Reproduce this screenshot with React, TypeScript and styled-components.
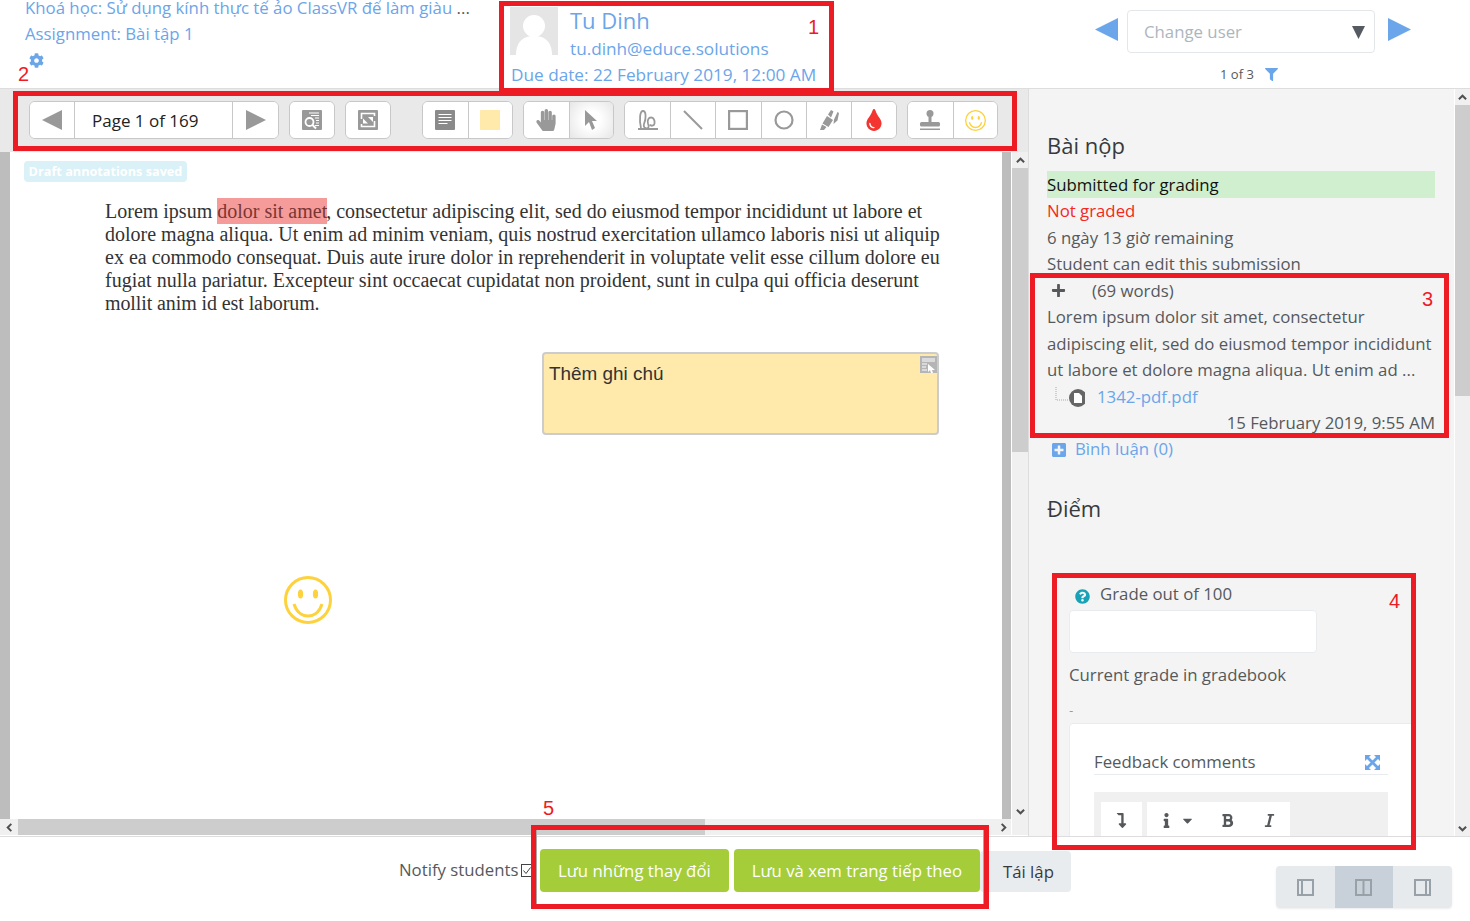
import React from "react";
import {
	FaBold,
	FaCaretDown,
	FaCog,
	FaFilter,
	FaHandPaper,
	FaInfo,
	FaItalic,
	FaLevelDownAlt,
	FaPlus,
	FaPlusSquare,
	FaQuestionCircle,
	FaTint,
} from "react-icons/fa";
import styled, { createGlobalStyle } from "styled-components";

const GlobalStyle = createGlobalStyle`
  html, body {
    margin: 0;
    padding: 0;
    background: #fff;
    font-family: "Open Sans", "Noto Sans", sans-serif;
    font-size: 16.8px;
    color: #55595c;
  }
  * { box-sizing: border-box; }
`;

const LINK = "#6ba5ea";

const Page = styled.div`
  position: relative;
  width: 1470px;
  height: 921px;
  overflow: hidden;
  display: flex;
  flex-direction: column;
`;

/* ---------- header ---------- */

const Header = styled.header`
  height: 89px;
  flex: 0 0 auto;
  display: flex;
  border-bottom: 1px solid #ddd;
`;

const CourseInfo = styled.div`
  width: 500px;
  padding: 0 0 0 25px;
  display: flex;
  flex-direction: column;
  white-space: nowrap;
`;

const CourseLine = styled.div`
  line-height: 16px;
  margin-bottom: 5px;
`;

const HeaderLink = styled.span`
  color: ${LINK};
`;

const AssignmentLink = styled(HeaderLink)`
  line-height: 26px;
`;

const GearRow = styled.div`
  color: ${LINK};
  font-size: 15px;
  height: 26px;
  padding-left: 4px;
  display: flex;
  align-items: center;
`;

const UserBlock = styled.div`
  width: 335px;
  padding: 7px 0 0 10px;
  display: flex;
  flex-direction: column;
`;

const UserRow = styled.div`
  display: flex;
  gap: 12px;
`;

const Avatar = styled.div`
  width: 48px;
  height: 48px;
  background: #e5e5e5;
  overflow: hidden;
`;

const UserText = styled.div`
  display: flex;
  flex-direction: column;
  margin-top: -2px;
`;

const UserName = styled.span`
  color: ${LINK};
  font-size: 22px;
  line-height: 30px;
`;

const UserEmail = styled.span`
  color: ${LINK};
  font-size: 17.2px;
  line-height: 24px;
  margin-top: 2px;
  white-space: nowrap;
`;

const DueDate = styled.span`
  color: ${LINK};
  font-size: 17.2px;
  line-height: 24px;
  margin: 2px 0 0 1px;
  white-space: nowrap;
`;

const UserSwitcher = styled.div`
  flex: 1;
  padding: 10px 0 0 260px;
  display: flex;
  flex-direction: column;
`;

const SwitcherRow = styled.div`
  display: flex;
  align-items: flex-start;
  gap: 9px;
`;

const ArrowIcon = styled.svg`
  width: 23px;
  height: 23px;
  margin-top: 8px;
  flex: 0 0 auto;
`;

const SelectBox = styled.div`
  width: 248px;
  height: 43px;
  margin: 0 4px 0 0;
  border: 1px solid #e4e7ea;
  border-radius: 4px;
  background: #fff;
  padding: 0 9px 0 16px;
  display: flex;
  align-items: center;
  justify-content: space-between;
  color: #adb5bd;
`;

const SelectCaret = styled.svg`
  width: 13px;
  height: 13px;
  margin-top: 1px;
`;

const Counter = styled.div`
  display: flex;
  align-items: center;
  gap: 11px;
  font-size: 13px;
  margin: 11px 0 0 125px;
  line-height: 20px;
  color: #55595c;
`;

const FilterIcon = styled.span`
  color: ${LINK};
  display: inline-flex;
  font-size: 13px;
`;

/* ---------- main area ---------- */

const Main = styled.div`
  flex: 1;
  min-height: 0;
  display: flex;
`;

const LeftColumn = styled.section`
  width: 1029px;
  flex: 0 0 auto;
  display: flex;
  flex-direction: column;
  border-right: 1px solid #ddd;
`;

const Toolbar = styled.div`
  height: 63px;
  flex: 0 0 auto;
  background: #e9e9e9;
  padding: 12px 0 0 29px;
  display: flex;
  align-items: flex-start;
`;

const ToolGroup = styled.div<{ $gap?: number }>`
  display: flex;
  height: 38px;
  margin-left: ${(p) => p.$gap ?? 10}px;
  background: #fff;
  border: 1px solid #c8c8c8;
  border-radius: 6px;
  overflow: hidden;
`;

const ToolButton = styled.div<{ $w?: number; $active?: boolean; $color?: string }>`
  width: ${(p) => p.$w ?? 45.2}px;
  display: flex;
  align-items: center;
  justify-content: center;
  color: ${(p) => p.$color ?? "#999"};
  font-size: 22px;
  background: ${(p) =>
		p.$active ? "radial-gradient(circle, #fff 30%, #e6e6e6 100%)" : "#fff"};
  & + & {
    border-left: 1px solid #c8c8c8;
  }
`;

const PageLabel = styled.span`
  color: #222;
  font-size: 17px;
  white-space: nowrap;
  width: 100%;
  padding-left: 17px;
`;

const PdfFrame = styled.div`
  flex: 1;
  min-height: 0;
  display: grid;
  grid-template-columns: 1fr 17px;
  grid-template-rows: 1fr 16px;
  margin-bottom: 1px;
`;

const PdfViewport = styled.div`
  position: relative;
  background: #fff;
  border-left: 10px solid #bdbdbd;
  border-right: 9px solid #bdbdbd;
  overflow: hidden;
  padding: 47px 0 0 95px;
`;

const DraftBadge = styled.div`
  position: absolute;
  left: 14px;
  top: 9px;
  width: 163px;
  height: 21px;
  background: #d9f1f7;
  border-radius: 4px;
  color: #fff;
  font-size: 12.7px;
  font-weight: 700;
  line-height: 21px;
  text-align: center;
  white-space: nowrap;
`;

const PdfLine = styled.div<{ $spacing?: number }>`
  font-family: "Liberation Serif", "Times New Roman", serif;
  font-size: 20px;
  line-height: 23px;
  color: #333;
  white-space: nowrap;
  letter-spacing: ${(p) => p.$spacing ?? 0}px;
`;

const Highlight = styled.span`
  background: #f59c9a;
  color: #7a3533;
  padding: 1px 0;
  display: inline-block;
  line-height: 24px;
  margin: -1px -1px -1px 0;
`;

const StickyNote = styled.div`
  position: absolute;
  left: 532px;
  top: 200px;
  width: 397px;
  height: 83px;
  background: #ffe9ab;
  border: 2px solid #ccc;
  border-radius: 4px;
  padding: 8px 5px;
  font-family: "Liberation Sans", Arial, sans-serif;
  font-size: 18.9px;
  line-height: 24px;
  color: #333;
`;

const NoteMenu = styled.svg`
  position: absolute;
  right: 0;
  top: 2px;
  width: 17px;
  height: 17px;
`;

const Smiley = styled.svg<{ $size: number }>`
  width: ${(p) => p.$size}px;
  height: ${(p) => p.$size}px;
`;

const PlacedStamp = styled.div`
  position: absolute;
  left: 274px;
  top: 424px;
  display: flex;
`;

const ScrollTrack = styled.div<{ $horizontal?: boolean }>`
  background: #f0f0f0;
  display: flex;
  flex-direction: ${(p) => (p.$horizontal ? "row" : "column")};
  align-items: stretch;
  border-left: ${(p) => (p.$horizontal ? "0" : "1px solid #fff")};
`;

const ScrollArrow = styled.div<{ $size?: number }>`
  flex: 0 0 ${(p) => p.$size ?? 16}px;
  display: flex;
  align-items: center;
  justify-content: center;
`;

const ScrollThumb = styled.div<{ $size: number }>`
  flex: 0 0 ${(p) => p.$size}px;
  background: #cdcdcd;
`;

const ScrollRest = styled.div`
  flex: 1;
`;

const Corner = styled.div`
  background: #f0f0f0;
  border-left: 1px solid #fff;
`;

/* ---------- right column ---------- */

const SidePanel = styled.aside`
  flex: 1;
  min-width: 0;
  display: grid;
  grid-template-columns: 1fr 16px;
  background: #f4f4f4;
  overflow: hidden;
`;

const SideContent = styled.div`
  padding: 42px 19px 0 18px;
  overflow: hidden;
  line-height: 26.4px;
  min-height: 0;
`;

const SectionTitle = styled.h3<{ $top?: number }>`
  margin: ${(p) => p.$top ?? 0}px 0 12px;
  font-size: 22px;
  font-weight: 400;
  line-height: 28px;
  color: #373a3c;
`;

const StatusRow = styled.div<{ $tone?: "ok" | "bad" }>`
  white-space: nowrap;
  color: ${(p) =>
		p.$tone === "ok" ? "#111" : p.$tone === "bad" ? "#f4281c" : "#55595c"};
  background: ${(p) => (p.$tone === "ok" ? "#cfefcf" : "transparent")};
  height: ${(p) => (p.$tone === "ok" ? 27 : 26.5)}px;
  line-height: ${(p) => (p.$tone === "ok" ? 28 : 26.4)}px;
`;

const WordCount = styled.div`
  display: flex;
  align-items: center;
  height: 26.5px;
  padding-left: 4px;
  gap: 26px;
`;

const PlusIcon = styled.span`
  display: inline-flex;
  color: #55595c;
  font-size: 15px;
`;

const FileRow = styled.div`
  display: flex;
  align-items: center;
  height: 26.5px;
  gap: 12px;
  padding-left: 8px;
  color: ${LINK};
`;

const DateRow = styled.div`
  text-align: right;
  height: 26.5px;
  white-space: nowrap;
`;

const CommentsRow = styled.div`
  display: flex;
  align-items: center;
  gap: 8px;
  height: 26px;
  padding-left: 4px;
  color: ${LINK};
`;

const CommentsIcon = styled.span`
  display: inline-flex;
  font-size: 16px;
`;

const GradeForm = styled.div`
  padding: 48px 0 0 22px;
  width: 386px;
`;

const GradeLabel = styled.div`
  display: flex;
  align-items: center;
  gap: 10px;
  padding-left: 6px;
  height: 26px;
`;

const HelpIcon = styled.span`
  display: inline-flex;
  color: #17a2b8;
  font-size: 15px;
  margin-top: 3px;
`;

const GradeInput = styled.div`
  width: 248px;
  height: 43px;
  margin-top: 2px;
  background: #fff;
  border: 1px solid #e9ecef;
  border-radius: 4px;
`;

const GradebookLabel = styled.div`
  margin-top: 9px;
  height: 26px;
`;

const GradeDash = styled.div`
  color: ${LINK};
  margin-top: 9px;
  height: 26px;
  font-size: 13px;
`;

const FeedbackCard = styled.div`
  height: 140px;
  width: 345px;
  background: #fff;
  border: 1px solid #e9ecef;
  border-radius: 4px 0 0 0;
  padding: 26px 24px 0;
`;

const FeedbackHead = styled.div`
  display: flex;
  justify-content: space-between;
  align-items: center;
  height: 25px;
  border-bottom: 1px solid #e9ecef;
  width: 294px;
  padding: 2px 8px 0 0;
  white-space: nowrap;
`;

const EditorBar = styled.div`
  margin-top: 17px;
  width: 294px;
  height: 60px;
  background: #f0f0f0;
  padding: 10px 0 0 7px;
  display: flex;
  gap: 5px;
`;

const EditorGroup = styled.div`
  display: flex;
  background: #fff;
  height: 40px;
`;

const EditorButton = styled.div<{ $w: number }>`
  width: ${(p) => p.$w}px;
  display: flex;
  align-items: flex-start;
  justify-content: center;
  gap: 6px;
  padding-top: 11px;
  color: #55595c;
  font-size: 15px;
`;

/* ---------- footer ---------- */

const Footer = styled.footer`
  height: 85px;
  flex: 0 0 auto;
  background: #fff;
  border-top: 1px solid #ddd;
  display: flex;
  align-items: flex-start;
  padding: 0 18px 0 399px;
  font-size: 16.75px;
`;

const NotifyLabel = styled.label`
  display: flex;
  align-items: center;
  height: 26px;
  margin-top: 19px;
  gap: 3px;
  width: 135px;
  white-space: nowrap;
`;

const CheckBox = styled.svg`
  width: 12px;
  height: 13px;
  margin-top: 2px;
`;

const ActionButton = styled.div<{ $primary?: boolean; $gap: number }>`
  height: ${(p) => (p.$primary ? 43 : 41)}px;
  margin: ${(p) => (p.$primary ? 12 : 14)}px 0 0 ${(p) => p.$gap}px;
  padding: 0 ${(p) => (p.$primary ? 18 : 17)}px 0 ${(p) => (p.$primary ? 18 : 23)}px;
  background: ${(p) => (p.$primary ? "#a4cd39" : "#e9ecef")};
  color: ${(p) => (p.$primary ? "#fff" : "#373a3c")};
  border-radius: 4px;
  display: flex;
  align-items: center;
  white-space: nowrap;
`;

const LayoutSwitch = styled.div`
  display: flex;
  margin: 29px 0 0 auto;
  height: 42px;
  border-radius: 4px;
  overflow: hidden;
  box-shadow: 0 1px 2px rgba(0, 0, 0, 0.08);
`;

const LayoutButton = styled.div<{ $active?: boolean }>`
  width: 58.7px;
  display: flex;
  align-items: center;
  justify-content: center;
  background: ${(p) => (p.$active ? "#c8d0d9" : "#e7eaed")};
`;

/* ---------- red callouts drawn over the screenshot ---------- */

const Callout = styled.div<{ $x: number; $y: number; $w: number; $h: number; $inner?: boolean }>`
  position: absolute;
  left: ${(p) => p.$x}px;
  top: ${(p) => p.$y}px;
  width: ${(p) => p.$w}px;
  height: ${(p) => p.$h}px;
  border: 5px solid #ed1c24;
  pointer-events: none;
  box-shadow: ${(p) =>
		p.$inner ? "inset 1px 0 #a8a8a8, inset -1px 0 #a8a8a8" : "none"};
`;

const CalloutNumber = styled.span<{ $x: number; $y: number }>`
  position: absolute;
  left: ${(p) => p.$x}px;
  top: ${(p) => p.$y}px;
  font-family: "Liberation Sans", Arial, sans-serif;
  font-size: 20px;
  line-height: 22px;
  color: #ed1c24;
`;

/* ---------- icons ---------- */

const GlyphSvg = styled.svg<{ $size?: number }>`
  width: ${(p) => p.$size ?? 20}px;
  height: ${(p) => p.$size ?? 20}px;
`;

const ChevronSvg = styled.svg<{ $rotate: number }>`
  width: 9px;
  height: 9px;
  transform: rotate(${(p) => p.$rotate}deg);
`;

const Triangle = ({ dir, color, size = 20 }: { dir: "l" | "r"; color: string; size?: number }) => (
	<GlyphSvg $size={size} viewBox="0 0 20 20">
		<polygon
			points={dir === "l" ? "0,10 20,0 20,20" : "0,0 20,10 0,20"}
			fill={color}
		/>
	</GlyphSvg>
);

const SearchDocIcon = () => (
	<GlyphSvg viewBox="0 0 20 20">
		<rect width="20" height="20" rx="1" fill="#999" />
		<path d="M7 3h10M9 5.5h8M13 8h4M14 10.5h3M14 13h3M13 15.5h4" stroke="#fff" strokeWidth="1" />
		<circle cx="7.5" cy="12" r="4" fill="none" stroke="#fff" strokeWidth="1.8" />
		<path d="M10.5 15l3.5 3.5" stroke="#fff" strokeWidth="2" />
	</GlyphSvg>
);

const ExpandBoxIcon = () => (
	<GlyphSvg viewBox="0 0 20 20">
		<rect width="20" height="20" rx="1" fill="#999" />
		<path d="M3.5 9V3.5h13V6M16.500 11v5.500h-13V14" fill="none" stroke="#fff" strokeWidth="1.6" />
		<polygon points="10,7 15,7 15,12" fill="#fff" />
		<polygon points="5,8.500 5,13.500 10,13.500" fill="#fff" />
	</GlyphSvg>
);

const CommentListIcon = () => (
	<GlyphSvg viewBox="0 0 20 20">
		<rect width="20" height="20" rx="1" fill="#8a8a8a" />
		<path d="M3.500 4.500h13M3.500 7.500h13M3.500 10.500h13M3.500 13.500h9" stroke="#fff" strokeWidth="1.2" />
	</GlyphSvg>
);

const ColorSwatch = () => (
	<GlyphSvg viewBox="0 0 20 20">
		<rect width="20" height="20" rx="1" fill="#ffe9ab" />
	</GlyphSvg>
);

const PointerIcon = () => (
	<GlyphSvg viewBox="0 0 20 20">
		<path d="M4 0l12 11h-5l3 7-3 2-3-8-4 4z" fill="#999" />
	</GlyphSvg>
);

const PenIcon = () => (
	<GlyphSvg $size={22} viewBox="0 0 22 22">
		<path
			d="M1 20h20M4 19C2 10 3 2 6 2s3.500 7 1 13c-1 3 1 4.500 3 4.500s2-2.500 1-5c-1-3 .500-6 3-6s4 2.500 3.500 6c-.500 2.500-3.500 3-4.500 1"
			fill="none"
			stroke="#999"
			strokeWidth="1.8"
		/>
	</GlyphSvg>
);

const LineIcon = () => (
	<GlyphSvg viewBox="0 0 20 20">
		<path d="M1 1l18 18" stroke="#999" strokeWidth="2" />
	</GlyphSvg>
);

const RectIcon = () => (
	<GlyphSvg viewBox="0 0 20 20">
		<rect x="1" y="1" width="18" height="18" fill="none" stroke="#999" strokeWidth="2.4" />
	</GlyphSvg>
);

const CircleIcon = () => (
	<GlyphSvg viewBox="0 0 20 20">
		<circle cx="10" cy="10" r="8.500" fill="none" stroke="#999" strokeWidth="2.2" />
	</GlyphSvg>
);

const MarkerIcon = () => (
	<GlyphSvg viewBox="0 0 20 20">
		<path
			d="M1 20l2-5.500 4.500 2.500-2.500 3zM3.500 13.500L8 6l6 4-4.500 7zM9 4.500L12 0l2.500 1.500-2.500 6zM15 9.500L18.500 2 20 3l-1.500 7.500-4 3.500z"
			fill="#999"
		/>
	</GlyphSvg>
);

const StampIcon = () => (
	<GlyphSvg $size={22} viewBox="0 0 22 22">
		<circle cx="11" cy="4.500" r="3.500" fill="#999" />
		<path d="M9.500 7h3v6.500h-3z" fill="#999" />
		<rect x="1" y="13" width="20" height="4.500" rx="1.500" fill="#999" />
		<rect x="1" y="19.500" width="20" height="1.500" fill="#999" />
	</GlyphSvg>
);

const SmileyFace = ({ size, weight }: { size: number; weight: number }) => (
	<Smiley $size={size} viewBox="0 0 48 48">
		<circle cx="24" cy="24" r="22.500" fill="none" stroke="#fdd23c" strokeWidth={weight} />
		<ellipse cx="16.500" cy="18" rx="2.600" ry="4.500" fill="#fdd23c" />
		<ellipse cx="31.500" cy="18" rx="2.600" ry="4.500" fill="#fdd23c" />
		<path d="M10 28c3 10 10 12 14 12s11-2 14-12" fill="none" stroke="#fdd23c" strokeWidth={weight} />
	</Smiley>
);

const LayoutIcon = ({ split }: { split: number }) => (
	<GlyphSvg $size={17} viewBox="0 0 17 17">
		<rect x="1" y="1" width="15" height="15" fill="none" stroke="#98a0a8" strokeWidth="2" />
		<path d={`M${split} 1v15`} stroke="#98a0a8" strokeWidth="2" />
	</GlyphSvg>
);

const FileBadge = () => (
	<GlyphSvg $size={30} viewBox="0 0 30 20">
		<path d="M1 0v13h12" fill="none" stroke="#aaa" strokeDasharray="1 1" />
		<circle cx="23" cy="11" r="9" fill="#666" />
		<path d="M19 6h5l3 3v7h-8z" fill="#fff" />
	</GlyphSvg>
);

const FullscreenIcon = () => (
	<GlyphSvg $size={15} viewBox="0 0 15 15">
		<path d="M0 0h6L0 6zM15 0v6L9 0zM0 15V9l6 6zM15 15H9l6-6z" fill={LINK} />
		<path d="M2 2l11 11M13 2L2 13" stroke={LINK} strokeWidth="2.800" />
	</GlyphSvg>
);

const Chevron = ({ rotate }: { rotate: number }) => (
	<ChevronSvg $rotate={rotate} viewBox="0 0 10 10">
		<path d="M1 7l4-4 4 4" fill="none" stroke="#505050" strokeWidth="2.200" />
	</ChevronSvg>
);

const App: React.FC = () => {
	return (
		<Page>
			<GlobalStyle />
			<Header>
				<CourseInfo>
					<CourseLine>
						<HeaderLink>
							Khoá học: Sử dụng kính thực tế ảo ClassVR để làm giàu
						</HeaderLink>{" "}
						...
					</CourseLine>
					<AssignmentLink>Assignment: Bài tập 1</AssignmentLink>
					<GearRow>
						<FaCog />
					</GearRow>
				</CourseInfo>
				<UserBlock>
					<UserRow>
						<Avatar>
							<GlyphSvg $size={48} viewBox="0 0 48 48">
								<circle cx="24" cy="19" r="11" fill="#fff" />
								<path d="M6 48c0-14 8-19 18-19s18 5 18 19z" fill="#fff" />
							</GlyphSvg>
						</Avatar>
						<UserText>
							<UserName>Tu Dinh</UserName>
							<UserEmail>tu.dinh@educe.solutions</UserEmail>
						</UserText>
					</UserRow>
					<DueDate>Due date: 22 February 2019, 12:00 AM</DueDate>
				</UserBlock>
				<UserSwitcher>
					<SwitcherRow>
						<ArrowIcon viewBox="0 0 23 23">
							<polygon points="0,11.5 23,0 23,23" fill={LINK} />
						</ArrowIcon>
						<SelectBox>
							Change user
							<SelectCaret viewBox="0 0 13 13">
								<polygon points="0,0 13,0 6.5,13" fill="#555b60" />
							</SelectCaret>
						</SelectBox>
						<ArrowIcon viewBox="0 0 23 23">
							<polygon points="0,0 23,11.5 0,23" fill={LINK} />
						</ArrowIcon>
					</SwitcherRow>
					<Counter>
						1 of 3
						<FilterIcon>
							<FaFilter />
						</FilterIcon>
					</Counter>
				</UserSwitcher>
			</Header>

			<Main>
				<LeftColumn>
					<Toolbar>
						<ToolGroup $gap={0}>
							<ToolButton $w={44}>
								<Triangle dir="l" color="#999" />
							</ToolButton>
							<ToolButton $w={158}>
								<PageLabel>Page 1 of 169</PageLabel>
							</ToolButton>
							<ToolButton $w={46}>
								<Triangle dir="r" color="#999" />
							</ToolButton>
						</ToolGroup>
						<ToolGroup>
							<ToolButton $w={44}>
								<SearchDocIcon />
							</ToolButton>
						</ToolGroup>
						<ToolGroup>
							<ToolButton $w={44}>
								<ExpandBoxIcon />
							</ToolButton>
						</ToolGroup>
						<ToolGroup $gap={31}>
							<ToolButton $w={44.5}>
								<CommentListIcon />
							</ToolButton>
							<ToolButton $w={44.5}>
								<ColorSwatch />
							</ToolButton>
						</ToolGroup>
						<ToolGroup>
							<ToolButton $w={44.5}>
								<FaHandPaper />
							</ToolButton>
							<ToolButton $w={44.5} $active>
								<PointerIcon />
							</ToolButton>
						</ToolGroup>
						<ToolGroup>
							<ToolButton>
								<PenIcon />
							</ToolButton>
							<ToolButton>
								<LineIcon />
							</ToolButton>
							<ToolButton>
								<RectIcon />
							</ToolButton>
							<ToolButton>
								<CircleIcon />
							</ToolButton>
							<ToolButton>
								<MarkerIcon />
							</ToolButton>
							<ToolButton $color="#f4352f">
								<FaTint />
							</ToolButton>
						</ToolGroup>
						<ToolGroup>
							<ToolButton $w={44.5}>
								<StampIcon />
							</ToolButton>
							<ToolButton $w={44.5}>
								<SmileyFace size={21} weight={3} />
							</ToolButton>
						</ToolGroup>
					</Toolbar>
					<PdfFrame>
						<PdfViewport>
							<DraftBadge>Draft annotations saved</DraftBadge>
							<PdfLine>
								Lorem ipsum <Highlight>dolor sit amet</Highlight>, consectetur
								adipiscing elit, sed do eiusmod tempor incididunt ut labore et
							</PdfLine>
							<PdfLine>
								dolore magna aliqua. Ut enim ad minim veniam, quis nostrud
								exercitation ullamco laboris nisi ut aliquip
							</PdfLine>
							<PdfLine>
								ex ea commodo consequat. Duis aute irure dolor in reprehenderit
								in voluptate velit esse cillum dolore eu
							</PdfLine>
							<PdfLine>
								fugiat nulla pariatur. Excepteur sint occaecat cupidatat non
								proident, sunt in culpa qui officia deserunt
							</PdfLine>
							<PdfLine $spacing={-0.1}>mollit anim id est laborum.</PdfLine>
							<StickyNote>
								Thêm ghi chú
								<NoteMenu viewBox="0 0 17 17">
									<rect width="17" height="17" fill="#b5b5b5" />
									<path d="M2 3h13M2 5h13" stroke="#fff" strokeWidth="1" />
									<path d="M2 8h5M2 11h4M2 14h5" stroke="#fff" />
									<path d="M8 8l7 6h-3l1 3h-2l-1-3-2 2z" fill="#fff" />
								</NoteMenu>
							</StickyNote>
							<PlacedStamp>
								<SmileyFace size={48} weight={3} />
							</PlacedStamp>
						</PdfViewport>
						<ScrollTrack>
							<ScrollArrow>
								<Chevron rotate={0} />
							</ScrollArrow>
							<ScrollThumb $size={284} />
							<ScrollRest />
							<ScrollArrow>
								<Chevron rotate={180} />
							</ScrollArrow>
						</ScrollTrack>
						<ScrollTrack $horizontal>
							<ScrollArrow $size={18}>
								<Chevron rotate={-90} />
							</ScrollArrow>
							<ScrollThumb $size={687} />
							<ScrollRest />
							<ScrollArrow>
								<Chevron rotate={90} />
							</ScrollArrow>
						</ScrollTrack>
						<Corner />
					</PdfFrame>
				</LeftColumn>

				<SidePanel>
					<SideContent>
						<SectionTitle>Bài nộp</SectionTitle>
						<StatusRow $tone="ok">Submitted for grading</StatusRow>
						<StatusRow $tone="bad">Not graded</StatusRow>
						<StatusRow>6 ngày 13 giờ remaining</StatusRow>
						<StatusRow>Student can edit this submission</StatusRow>
						<WordCount>
							<PlusIcon>
								<FaPlus />
							</PlusIcon>
							(69 words)
						</WordCount>
						<StatusRow>Lorem ipsum dolor sit amet, consectetur</StatusRow>
						<StatusRow>adipiscing elit, sed do eiusmod tempor incididunt</StatusRow>
						<StatusRow>ut labore et dolore magna aliqua. Ut enim ad ...</StatusRow>
						<FileRow>
							<FileBadge />
							1342-pdf.pdf
						</FileRow>
						<DateRow>15 February 2019, 9:55 AM</DateRow>
						<CommentsRow>
							<CommentsIcon>
								<FaPlusSquare />
							</CommentsIcon>
							Bình luận (0)
						</CommentsRow>
						<SectionTitle $top={31}>Điểm</SectionTitle>
						<GradeForm>
							<GradeLabel>
								<HelpIcon>
									<FaQuestionCircle />
								</HelpIcon>
								Grade out of 100
							</GradeLabel>
							<GradeInput />
							<GradebookLabel>Current grade in gradebook</GradebookLabel>
							<GradeDash>-</GradeDash>
							<FeedbackCard>
								<FeedbackHead>
									Feedback comments
									<FullscreenIcon />
								</FeedbackHead>
								<EditorBar>
									<EditorGroup>
										<EditorButton $w={41}>
											<FaLevelDownAlt />
										</EditorButton>
									</EditorGroup>
									<EditorGroup>
										<EditorButton $w={60}>
											<FaInfo />
											<FaCaretDown />
										</EditorButton>
										<EditorButton $w={41}>
											<FaBold />
										</EditorButton>
										<EditorButton $w={42}>
											<FaItalic />
										</EditorButton>
									</EditorGroup>
								</EditorBar>
							</FeedbackCard>
						</GradeForm>
					</SideContent>
					<ScrollTrack>
						<ScrollArrow>
							<Chevron rotate={0} />
						</ScrollArrow>
						<ScrollThumb $size={291} />
						<ScrollRest />
						<ScrollArrow>
							<Chevron rotate={180} />
						</ScrollArrow>
					</ScrollTrack>
				</SidePanel>
			</Main>

			<Footer>
				<NotifyLabel>
					Notify students
					<CheckBox viewBox="0 0 12 13">
						<rect x="0.5" y="0.5" width="11" height="12" fill="#fff" stroke="#444" />
						<path d="M2.5 6.5l2.500 3 4.500-6" fill="none" stroke="#444" />
					</CheckBox>
				</NotifyLabel>
				<ActionButton $primary $gap={6}>
					Lưu những thay đổi
				</ActionButton>
				<ActionButton $primary $gap={5}>
					Lưu và xem trang tiếp theo
				</ActionButton>
				<ActionButton $gap={0}>Tái lập</ActionButton>
				<LayoutSwitch>
					<LayoutButton>
						<LayoutIcon split={5} />
					</LayoutButton>
					<LayoutButton $active>
						<LayoutIcon split={8.5} />
					</LayoutButton>
					<LayoutButton>
						<LayoutIcon split={12} />
					</LayoutButton>
				</LayoutSwitch>
			</Footer>

			<Callout $x={499} $y={1} $w={335} $h={92} />
			<Callout $x={13} $y={91} $w={1004} $h={60} />
			<Callout $x={1030} $y={273} $w={419} $h={165} />
			<Callout $x={1052} $y={573} $w={364} $h={277} />
			<Callout $x={531} $y={825} $w={458} $h={84} $inner />
			<CalloutNumber $x={808} $y={16}>1</CalloutNumber>
			<CalloutNumber $x={18} $y={63}>2</CalloutNumber>
			<CalloutNumber $x={1422} $y={288}>3</CalloutNumber>
			<CalloutNumber $x={1389} $y={590}>4</CalloutNumber>
			<CalloutNumber $x={543} $y={797}>5</CalloutNumber>
		</Page>
	);
};

export default App;
